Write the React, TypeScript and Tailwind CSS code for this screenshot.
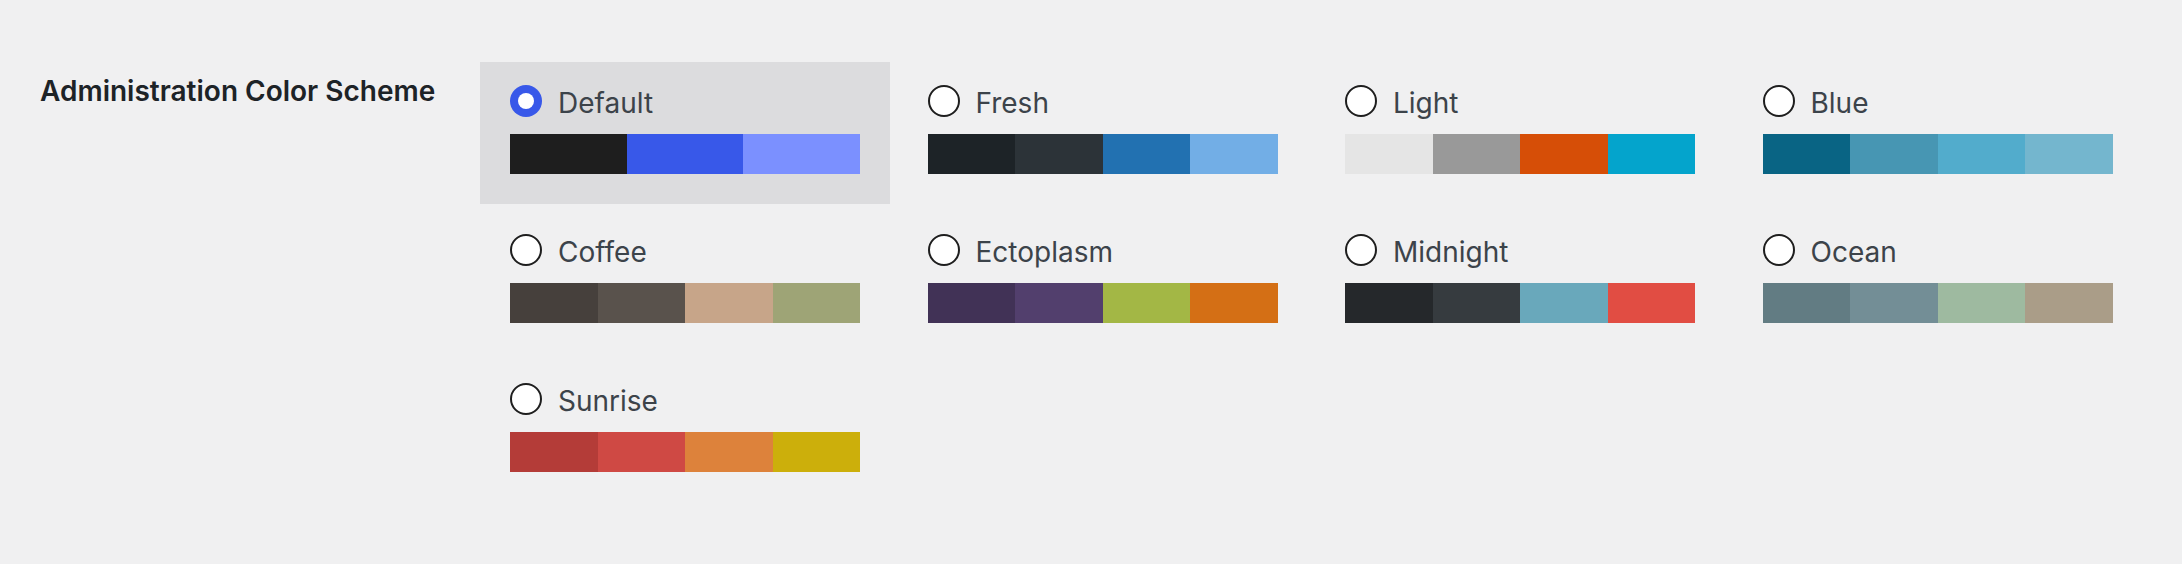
import { useState } from 'react';

type Scheme = {
  id: string;
  name: string;
  colors: string[];
};

const schemes: Scheme[] = [
  { id: 'default', name: 'Default', colors: ['bg-[#1e1e1e]', 'bg-[#3858e9]', 'bg-[#7b90ff]'] },
  { id: 'fresh', name: 'Fresh', colors: ['bg-[#1d2327]', 'bg-[#2c3338]', 'bg-[#2271b1]', 'bg-[#72aee6]'] },
  { id: 'light', name: 'Light', colors: ['bg-[#e5e5e5]', 'bg-[#999999]', 'bg-[#d64e07]', 'bg-[#04a4cc]'] },
  { id: 'blue', name: 'Blue', colors: ['bg-[#096484]', 'bg-[#4796b3]', 'bg-[#52accc]', 'bg-[#74b6ce]'] },
  { id: 'coffee', name: 'Coffee', colors: ['bg-[#46403c]', 'bg-[#59524c]', 'bg-[#c7a589]', 'bg-[#9ea476]'] },
  { id: 'ectoplasm', name: 'Ectoplasm', colors: ['bg-[#413256]', 'bg-[#523f6d]', 'bg-[#a3b745]', 'bg-[#d46f15]'] },
  { id: 'midnight', name: 'Midnight', colors: ['bg-[#25282b]', 'bg-[#363b3f]', 'bg-[#69a8bb]', 'bg-[#e14d43]'] },
  { id: 'ocean', name: 'Ocean', colors: ['bg-[#627c83]', 'bg-[#738e96]', 'bg-[#9ebaa0]', 'bg-[#aa9d88]'] },
  { id: 'sunrise', name: 'Sunrise', colors: ['bg-[#b43c38]', 'bg-[#cf4944]', 'bg-[#dd823b]', 'bg-[#ccaf0b]'] },
];

const App = () => {
  const [selected, setSelected] = useState('default');

  return (
    <div
      className="min-h-screen bg-[#f0f0f1] pt-[62px] pl-[40px] flex"
      style={{ fontFamily: 'Inter, "Noto Sans", sans-serif' }}
    >
      <div className="w-[440px] shrink-0 pt-[11px]">
        <h2 className="text-[28px] leading-[36px] font-semibold text-[#1d2327]">
          Administration Color Scheme
        </h2>
      </div>

      <div className="grid grid-cols-[repeat(4,410px)] gap-x-[7.5px] gap-y-[7px] content-start">
        {schemes.map((s) => {
          const isActive = selected === s.id;
          return (
            <div
              key={s.id}
              onClick={() => setSelected(s.id)}
              className={`pt-[23px] px-[30px] pb-[30px] cursor-pointer ${isActive ? 'bg-[#dcdcde]' : ''}`}
            >
              <label className="flex items-center gap-[16px] h-[32px] cursor-pointer">
                {isActive ? (
                  <span className="w-[32px] h-[32px] rounded-full bg-[#3858e9] flex items-center justify-center shrink-0">
                    <span className="w-[16px] h-[16px] rounded-full bg-white" />
                  </span>
                ) : (
                  <span className="w-[32px] h-[32px] rounded-full bg-white border-2 border-[#1e1e1e] shrink-0" />
                )}
                <span className="mt-[3px] text-[28px] leading-[32px] text-[#3c434a]">{s.name}</span>
              </label>
              <div className="mt-[17px] flex h-[40px]">
                {s.colors.map((c) => (
                  <div key={c} className={`flex-1 ${c}`} />
                ))}
              </div>
            </div>
          );
        })}
      </div>
    </div>
  );
};

export default App;
